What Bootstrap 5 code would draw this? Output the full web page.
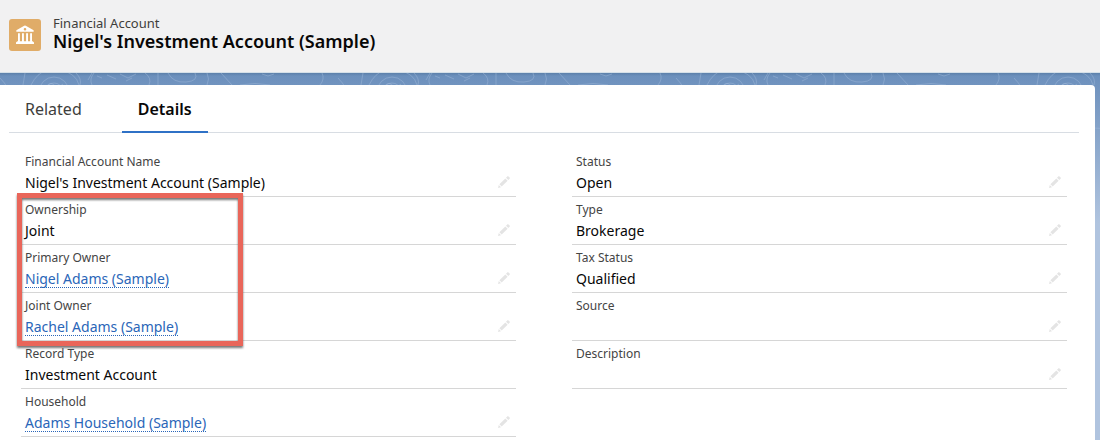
<!DOCTYPE html>
<html lang="en">
<head>
<meta charset="utf-8">
<meta name="viewport" content="width=device-width, initial-scale=1">
<title>Nigel's Investment Account (Sample)</title>
<link href="https://cdn.jsdelivr.net/npm/bootstrap@5.3.0/dist/css/bootstrap.min.css" rel="stylesheet">
<style>
  body { font-family: "Noto Sans", sans-serif; font-size: 14px; color: #080707; background: #b0c4df; }
  a { color: #2a66b8; }
  .record-header { background: #f1f1f2; padding: 15px 9px 21px; border-bottom: 1px solid #d5e0e8; }
  .record-icon { width: 32px; height: 32px; border-radius: 3px; background: #e0ac68; }
  .record-kind { font-size: 13px; line-height: 16px; color: #3e3e3c; }
  .record-title { font-size: 18px; line-height: 20px; font-weight: 600; color: #080707; }
  .page-body { position: relative; padding: 12px 5px 0 0; background: linear-gradient(#6b8fbc, #b0c4df 150px); }
  .backdrop { position: absolute; top: 0; left: 0; width: 100%; height: 100px; }
  .page-body::before { content: ""; position: absolute; inset: 0 0 auto; height: 3px; background: linear-gradient(#53779f99, #53779f00); }
  .record-panel { position: relative; min-height: calc(100vh - 85px); background: #fff; border-top-right-radius: 4px; padding: 0 16px 0 9px; }
  .record-tabs { border-bottom: 1px solid #d8dde3; gap: 24px; }
  .record-tabs .nav-link { font-size: 16px; line-height: 24px; padding: 12px 16px 10px; color: #3e3e3c; border: 0; border-bottom: 2px solid transparent; border-radius: 0; margin-bottom: -1px; }
  .record-tabs .nav-link.active { font-weight: 600; color: #080707; border-bottom-color: #2f71c6; }
  .field-columns { padding: 16px 12px 0; gap: 56px; }
  .field { min-height: 48px; padding: 4px 4px 1px; border-bottom: 1px solid #d6d6d6; }
  .field-label { font-size: 12px; line-height: 18px; font-weight: 400; color: #444; }
  .field-value { min-height: 24px; line-height: 18px; padding-top: 3px; margin: 0; }
  .field-value a { display: inline-block; line-height: 17px; text-decoration: none; border-bottom: 1px dotted #2a66b8; }
  .edit-btn { line-height: 0; color: #e4e4e4; margin: 0 2px 7px 0; }
  .callout-box { position: absolute; top: -4px; bottom: -5px; left: -4px; width: 226px; border: 5px solid #e9665a; filter: drop-shadow(0 2px 1px #555c); pointer-events: none; }
</style>
</head>
<body>
<svg width="0" height="0" class="position-absolute" aria-hidden="true">
  <symbol id="pencil" viewBox="0 0 12 12">
    <path fill="currentColor" d="M0 12l.8-3 2.200 2.200zM1.400 8.300l5.900-5.900 2.300 2.300-5.900 5.900zM8 1.700L9.300.4q.6-.6 1.200 0l1.100 1.100q.6.6 0 1.200L10.300 4z"/>
  </symbol>
</svg>

<header class="record-header d-flex align-items-start">
  <div class="record-icon d-flex flex-shrink-0 mt-1 me-2 align-items-center justify-content-center">
    <svg width="20" height="20" viewBox="0 0 20 20" fill="#fff" aria-hidden="true">
      <path fill-rule="evenodd" d="M10 .6q.4 0 .8.200l7.400 4.200q.5.300.5.800v.5q0 .5-.5.500H1.800q-.5 0-.5-.5v-.5q0-.5.500-.8L9.200.8q.4-.2.800-.2zM10 2.900a1.300 1.300 0 100 2.600 1.300 1.300 0 000-2.600z"/>
      <path d="M3 8.200h1.900v8H3zM7 8.200h1.900v8H7zM11.100 8.200H13v8h-1.900zM15.100 8.200H17v8h-1.900zM2.300 16.300h15.400l1.300 1.300v1q0 .500-.500.500h-17q-.5 0-.5-.5v-1z"/>
    </svg>
  </div>
  <div class="ms-1">
    <div class="record-kind">Financial Account</div>
    <h1 class="record-title mb-0">Nigel's Investment Account (Sample)</h1>
  </div>
</header>

<div class="page-body">
  <svg class="backdrop" aria-hidden="true">
    <defs>
      <pattern id="contours" width="338" height="100" patternUnits="userSpaceOnUse">
        <g fill="none" stroke="#9bb6d8" stroke-opacity=".5" stroke-width="1">
          <circle cx="54" cy="19" r="9"/><circle cx="54" cy="19" r="15"/><path d="M31 12q6-12 16-15M60-3q16 3 19 15"/>
          <path d="M46 14q4-6 8-2t9-1M23 12l2-12M76 0q6 6 4 12M92 0l-4 7M92 12q-3-6 2-12M97 3l5 2M107 2l9 4M120 1l8 4 8-4M126 8l6-3"/>
          <path d="M145 0q7 5 4 12M158 0v12M168 0q5 10 18 9t9-9M207 12q3-6 0-12M221 0l11 12M240 12q15-3 30 0M262 1l6 2 6-2M320 12q5-6 2-12"/>
          <path d="M0 45q20-20 0-40M338 25q-12 25 0 40M20 90Q80 20 140 90M180 100q40-60 90 0"/>
        </g>
      </pattern>
    </defs>
    <rect width="100%" height="100%" fill="url(#contours)"/>
  </svg>
  <main class="record-panel">
    <ul class="nav record-tabs" role="tablist">
      <li class="nav-item"><button type="button" class="nav-link bg-transparent" role="tab" aria-selected="false">Related</button></li>
      <li class="nav-item"><button type="button" class="nav-link bg-transparent active" role="tab" aria-selected="true">Details</button></li>
    </ul>

    <div class="field-columns d-flex">
      <dl class="col mb-0">
        <div class="field d-flex justify-content-between">
          <div><dt class="field-label">Financial Account Name</dt><dd class="field-value">Nigel's Investment Account (Sample)</dd></div>
          <button type="button" class="edit-btn btn p-0 border-0 align-self-end" aria-label="Edit Financial Account Name"><svg width="12" height="12"><use href="#pencil"/></svg></button>
        </div>
        <div class="position-relative">
          <div class="field d-flex justify-content-between">
            <div><dt class="field-label">Ownership</dt><dd class="field-value">Joint</dd></div>
            <button type="button" class="edit-btn btn p-0 border-0 align-self-end" aria-label="Edit Ownership"><svg width="12" height="12"><use href="#pencil"/></svg></button>
          </div>
          <div class="field d-flex justify-content-between">
            <div><dt class="field-label">Primary Owner</dt><dd class="field-value"><a href="#">Nigel Adams (Sample)</a></dd></div>
            <button type="button" class="edit-btn btn p-0 border-0 align-self-end" aria-label="Edit Primary Owner"><svg width="12" height="12"><use href="#pencil"/></svg></button>
          </div>
          <div class="field d-flex justify-content-between">
            <div><dt class="field-label">Joint Owner</dt><dd class="field-value"><a href="#">Rachel Adams (Sample)</a></dd></div>
            <button type="button" class="edit-btn btn p-0 border-0 align-self-end" aria-label="Edit Joint Owner"><svg width="12" height="12"><use href="#pencil"/></svg></button>
          </div>
          <div class="callout-box"></div>
        </div>
        <div class="field">
          <dt class="field-label">Record Type</dt><dd class="field-value">Investment Account</dd>
        </div>
        <div class="field d-flex justify-content-between">
          <div><dt class="field-label">Household</dt><dd class="field-value"><a href="#">Adams Household (Sample)</a></dd></div>
          <button type="button" class="edit-btn btn p-0 border-0 align-self-end" aria-label="Edit Household"><svg width="12" height="12"><use href="#pencil"/></svg></button>
        </div>
      </dl>

      <dl class="col mb-0">
        <div class="field d-flex justify-content-between">
          <div><dt class="field-label">Status</dt><dd class="field-value">Open</dd></div>
          <button type="button" class="edit-btn btn p-0 border-0 align-self-end" aria-label="Edit Status"><svg width="12" height="12"><use href="#pencil"/></svg></button>
        </div>
        <div class="field d-flex justify-content-between">
          <div><dt class="field-label">Type</dt><dd class="field-value">Brokerage</dd></div>
          <button type="button" class="edit-btn btn p-0 border-0 align-self-end" aria-label="Edit Type"><svg width="12" height="12"><use href="#pencil"/></svg></button>
        </div>
        <div class="field d-flex justify-content-between">
          <div><dt class="field-label">Tax Status</dt><dd class="field-value">Qualified</dd></div>
          <button type="button" class="edit-btn btn p-0 border-0 align-self-end" aria-label="Edit Tax Status"><svg width="12" height="12"><use href="#pencil"/></svg></button>
        </div>
        <div class="field d-flex justify-content-between">
          <div><dt class="field-label">Source</dt><dd class="field-value"></dd></div>
          <button type="button" class="edit-btn btn p-0 border-0 align-self-end" aria-label="Edit Source"><svg width="12" height="12"><use href="#pencil"/></svg></button>
        </div>
        <div class="field d-flex justify-content-between">
          <div><dt class="field-label">Description</dt><dd class="field-value"></dd></div>
          <button type="button" class="edit-btn btn p-0 border-0 align-self-end" aria-label="Edit Description"><svg width="12" height="12"><use href="#pencil"/></svg></button>
        </div>
      </dl>
    </div>
  </main>
</div>
<script src="https://cdn.jsdelivr.net/npm/bootstrap@5.3.0/dist/js/bootstrap.bundle.min.js"></script>
</body>
</html>
